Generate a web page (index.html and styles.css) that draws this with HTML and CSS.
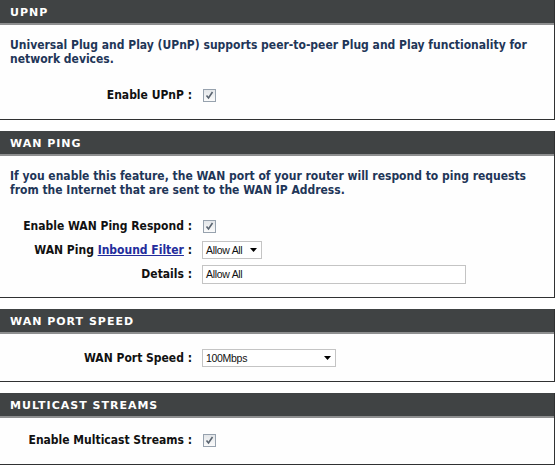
FILE: index.html
```html
<!DOCTYPE html>
<html>
<head>
<meta charset="utf-8">
<link rel="stylesheet" href="styles.css">
</head>
<body>
<div class="page">
  <section class="box">
    <div class="hd">UPNP</div>
    <div class="bd with-desc">
      <p class="desc">Universal Plug and Play (UPnP) supports peer-to-peer Plug and Play functionality for network devices.</p>
      <div class="row"><span class="lbl">Enable UPnP :</span><span class="cb"><svg width="9" height="9" viewBox="0 0 9 9"><path d="M1.5 4.5 L3.5 7 L7.5 1" fill="none" stroke="#5a6470" stroke-width="1.6"/></svg></span></div>
    </div>
  </section>

  <section class="box">
    <div class="hd">WAN PING</div>
    <div class="bd with-desc ping">
      <p class="desc">If you enable this feature, the WAN port of your router will respond to ping requests from the Internet that are sent to the WAN IP Address.</p>
      <div class="row"><span class="lbl">Enable WAN Ping Respond :</span><span class="cb"><svg width="9" height="9" viewBox="0 0 9 9"><path d="M1.5 4.5 L3.5 7 L7.5 1" fill="none" stroke="#5a6470" stroke-width="1.6"/></svg></span></div>
      <div class="row"><span class="lbl">WAN Ping <a href="#">Inbound Filter</a> :</span><span class="sel sel-filter"><span class="sel-text">Allow All</span><svg class="arrow" width="7" height="4" viewBox="0 0 7 4"><path d="M0 0 H7 L3.5 4 Z" fill="#000"/></svg></span></div>
      <div class="row"><span class="lbl">Details :</span><span class="txt">Allow All</span></div>
    </div>
  </section>

  <section class="box">
    <div class="hd">WAN PORT SPEED</div>
    <div class="bd speed">
      <div class="row"><span class="lbl">WAN Port Speed :</span><span class="sel sel-speed"><span class="sel-text">100Mbps</span><svg class="arrow" width="7" height="4" viewBox="0 0 7 4"><path d="M0 0 H7 L3.5 4 Z" fill="#000"/></svg></span></div>
    </div>
  </section>

  <section class="box">
    <div class="hd">MULTICAST STREAMS</div>
    <div class="bd multi">
      <div class="row"><span class="lbl">Enable Multicast Streams :</span><span class="cb"><svg width="9" height="9" viewBox="0 0 9 9"><path d="M1.5 4.5 L3.5 7 L7.5 1" fill="none" stroke="#5a6470" stroke-width="1.6"/></svg></span></div>
    </div>
  </section>
</div>
</body>
</html>
```

FILE: styles.css
```css
html, body {
  margin: 0;
  padding: 0;
  background: #ffffff;
}

.page {
  width: 555px;
}

.box {
  border-right: 1px solid #303132;
  border-bottom: 1px solid #303132;
  margin-bottom: 11px;
  background: #fefefe;
}

.hd {
  height: 23px;
  line-height: 25px;
  background: #404344;
  border-bottom: 2px solid #8e8f90;
  color: #ffffff;
  font-family: "DejaVu Sans", sans-serif;
  font-weight: bold;
  font-size: 11px;
  letter-spacing: 1px;
  padding-left: 10px;
}

.bd {
  display: flex;
  flex-direction: column;
}

.with-desc {
  padding: 13px 0 12px;
}

.ping {
  padding-bottom: 11px;
}

.speed {
  padding: 12px 0 11px;
}

.multi {
  padding: 10px 0 12px;
}

.desc {
  margin: 0 0 17px 10px;
  font-family: "DejaVu Sans Condensed", "DejaVu Sans", sans-serif;
  font-weight: bold;
  font-size: 12px;
  line-height: 14px;
  color: #1f3658;
}

.row {
  display: flex;
  align-items: center;
  height: 24px;
}

.lbl {
  width: 192px;
  text-align: right;
  font-family: "DejaVu Sans Condensed", "DejaVu Sans", sans-serif;
  font-weight: bold;
  font-size: 12px;
  color: #111111;
  margin-right: 10px;
}

.lbl a {
  color: #232c9c;
  text-decoration: underline;
}

.cb {
  width: 11px;
  height: 11px;
  border: 1px solid #97a2ae;
  background: linear-gradient(#e3e6e9, #fbfbfb);
  display: flex;
  align-items: center;
  justify-content: center;
  margin-left: 1px;
}

.sel, .txt {
  box-sizing: border-box;
  display: flex;
  align-items: center;
  border: 1px solid #c4c4c4;
  background: #ffffff;
  font-family: "Liberation Sans", Arial, sans-serif;
  font-size: 10.5px;
  letter-spacing: -0.3px;
  color: #111111;
  padding-left: 3px;
}

.sel {
  height: 18px;
  justify-content: space-between;
  padding-right: 4px;
}

.sel-filter {
  width: 60px;
}

.sel-speed {
  width: 134px;
}

.txt {
  width: 264px;
  height: 19px;
}

.arrow {
  display: block;
}
```
